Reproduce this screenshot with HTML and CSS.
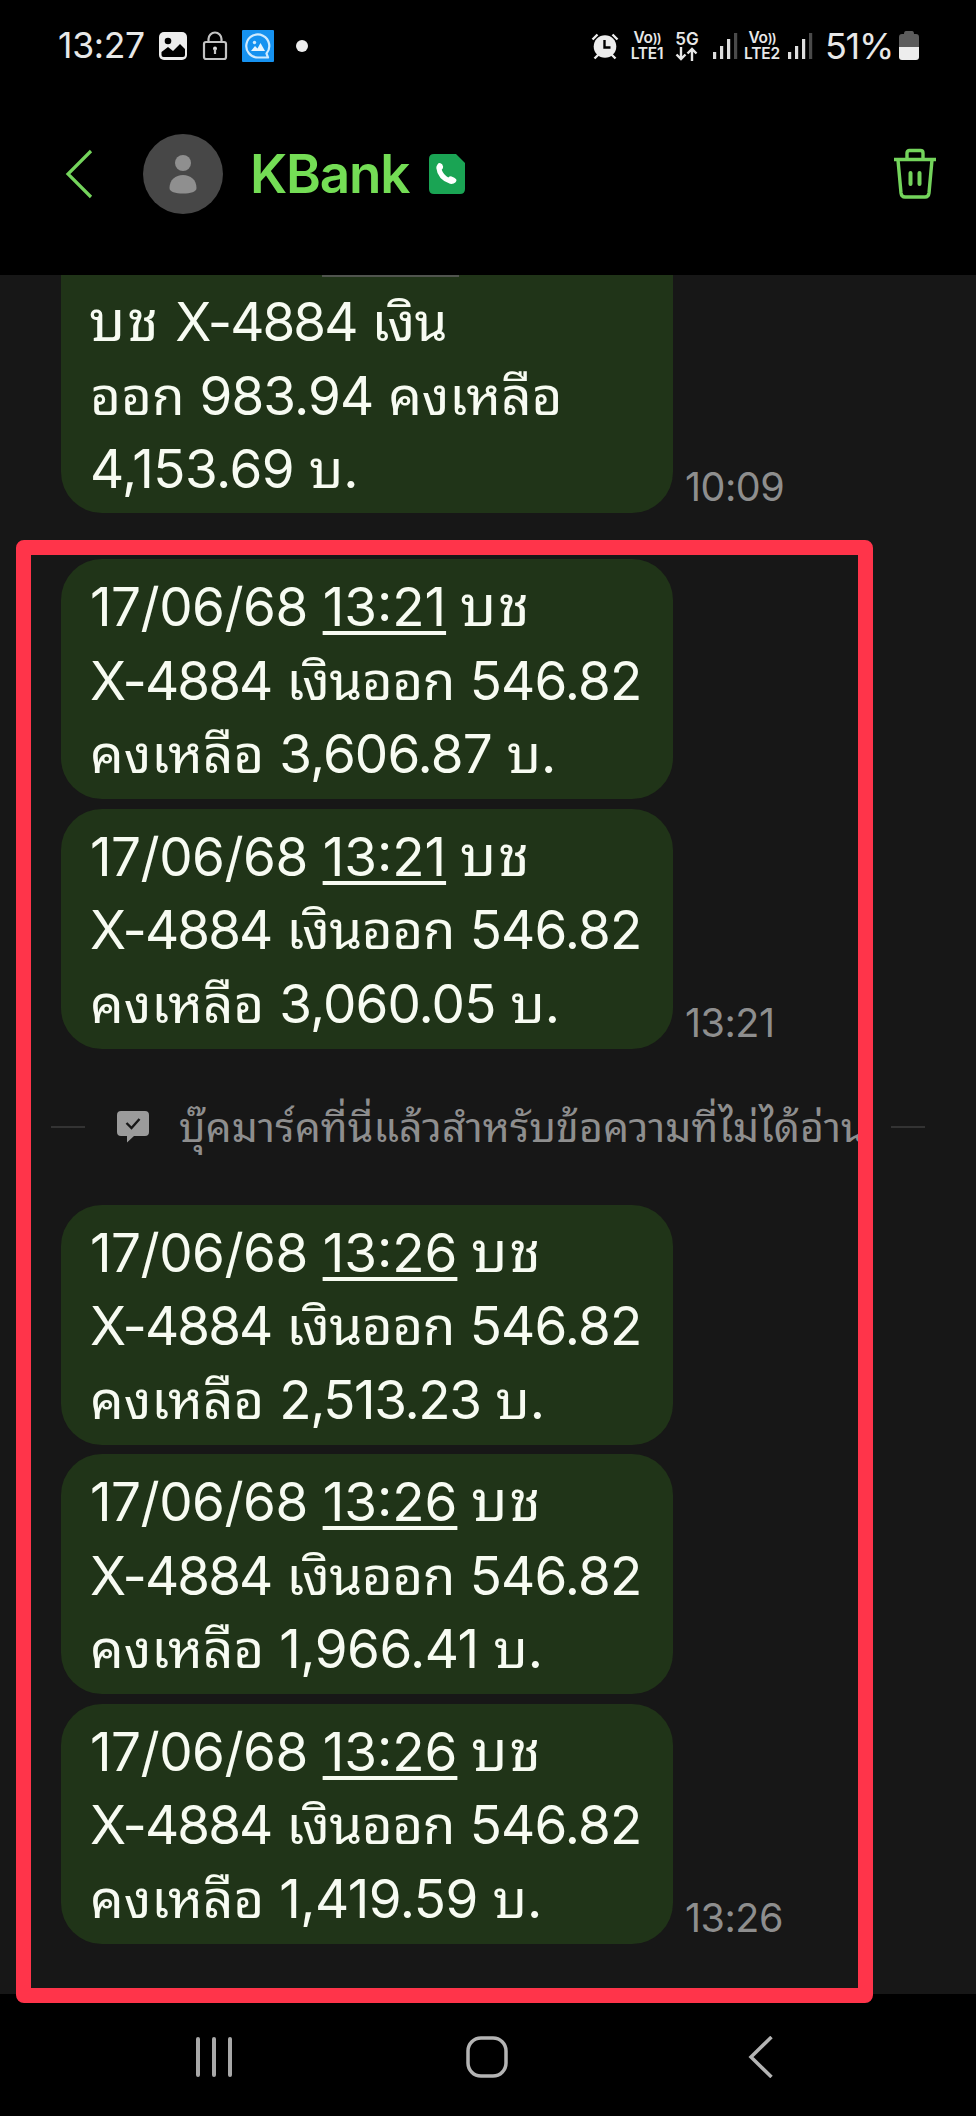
FILE: index.html
```html
<!DOCTYPE html>
<html lang="th">
<head>
<meta charset="utf-8">
<title>KBank</title>
<link rel="stylesheet" href="styles.css">
</head>
<body>
<div class="phone">
  <header class="top">
    <div class="status">
      <span class="clock">13:27</span>
      <svg class="ic-photo" width="30" height="30" viewBox="0 0 30 30"><rect x="1" y="1" width="28" height="28" rx="5" fill="#ededed"/><circle cx="10" cy="10" r="3.3" fill="#000"/><path d="M3.5 24v-3l6.5-5 5 4 7-7 5 5v6q0 2-2 2H5.500q-2 0-2-2z" fill="#000"/></svg>
      <svg class="ic-lock" width="26" height="30" viewBox="0 0 26 30" fill="none" stroke="#c4c4c4" stroke-width="2.200"><rect x="2" y="11" width="22" height="17" rx="2"/><path d="M6.500 11V8a6.500 6.500 0 0 1 13 0v3"/><circle cx="13" cy="17.500" r="2" fill="#ddd" stroke="none"/><path d="M13 18v5"/></svg>
      <svg class="ic-app" width="32" height="32" viewBox="0 0 32 32"><rect width="32" height="32" rx="1" fill="#1692f0"/><path d="M26 27.500H16A11.500 11.500 0 1 1 24.500 23.500z" fill="none" stroke="#cfeafe" stroke-width="2.200" stroke-linejoin="round"/><path d="M9 21l4-5 2.500 2.500 3-5.500 4.500 8z" fill="#e6f5ff"/><circle cx="12.500" cy="12.500" r="1.700" fill="#cfeafe"/></svg>
      <span class="dot"></span>
      <span class="grow"></span>
      <svg class="ic-alarm" width="28" height="28" viewBox="0 0 28 28"><circle cx="14" cy="14.500" r="11.300" fill="#ededed"/><path d="M1.500 7.500l5-5M26.500 7.500l-5-5M3.500 26.500l4-4M24.500 26.500l-4-4" stroke="#ededed" stroke-width="2.400"/><path d="M13.500 8v7.500h6" fill="none" stroke="#000" stroke-width="2.400"/></svg>
      <span class="volte v1"><span>Vo<i>))</i></span><span>LTE1</span></span>
      <span class="net"><span>5G</span><svg width="24" height="14" viewBox="0 0 24 14" fill="none" stroke="#e8e8e8" stroke-width="2.400"><path d="M6 0v12M1.500 7.500L6 12l4.500-4.500M17 14V2M12.500 6.500L17 2l4.500 4.500"/></svg></span>
      <svg class="s1" width="26" height="28" viewBox="0 0 26 28" fill="#dedede"><rect x="1" y="20" width="3.200" height="7"/><rect x="8" y="14" width="3.200" height="13"/><rect x="15" y="7" width="3.200" height="20"/><rect x="22" y="1" width="3.200" height="26" fill="#4a4a4a"/></svg>
      <span class="volte v2"><span>Vo<i>))</i></span><span>LTE2</span></span>
      <svg class="s2" width="26" height="28" viewBox="0 0 26 28" fill="#dedede"><rect x="1" y="20" width="3.200" height="7"/><rect x="8" y="14" width="3.200" height="13"/><rect x="15" y="7" width="3.200" height="20"/><rect x="22" y="1" width="3.200" height="26" fill="#4a4a4a"/></svg>
      <span class="pct">51%</span>
      <svg class="ic-bat" width="20" height="29" viewBox="0 0 20 29"><path d="M0 16V6q0-3 3-3h2q0-3 2-3h6q2 0 2 3h2q3 0 3 3v10z" fill="#5c5c5c"/><path d="M0 16h20v10q0 3-3 3H3q-3 0-3-3z" fill="#ededed"/></svg>
    </div>
    <div class="bar">
      <svg class="ic-back" width="28" height="50" viewBox="0 0 28 50" fill="none" stroke="#74d45c" stroke-width="3.200"><path d="M26 2L3 25l23 23"/></svg>
      <span class="avatar"><svg width="80" height="80" viewBox="0 0 80 80" fill="#8f8f8f"><circle cx="40" cy="29" r="8"/><path d="M26.500 54c0-8 6-13 13.500-13s13.500 5 13.500 13c0 4-6 5.500-13.500 5.500S26.500 58 26.500 54z"/></svg></span>
      <span class="name">KBank</span>
      <svg class="ic-call" width="36" height="40" viewBox="0 0 36 40"><path d="M5 0h22l9 9v26q0 5-5 5H5q-5 0-5-5V5q0-5 5-5z" fill="#1aa454"/><path d="M8.500 10.500q1-1.800 3-1.300 2 .5 2.600 3.300.3 2-1.400 3.300 1.800 5 6.600 7.700 1.500-1.600 3.300-1.100 3.200.9 4.600 2.800.8 1.400-.6 3-2.200 2.200-5.600 1.600Q8.500 25.500 7.300 14q-.1-2 1.200-3.500z" fill="#fff"/></svg>
      <span class="grow"></span>
      <svg class="ic-trash" width="44" height="52" viewBox="0 0 44 52" fill="none" stroke="#74d45c" stroke-width="3.400"><path d="M1 11.500h42M14 11V5q0-2.500 2.500-2.500h11q2.500 0 2.500 2.500v6M5 12l3 33q.5 4 4 4h20q3.500 0 4-4l3-33"/><path d="M17.500 25v11M26.500 25v11" stroke-width="4" stroke-linecap="round"/></svg>
    </div>
  </header>
  <main class="chat">
    <div class="row first"><div class="bubble cut">
      <p><span class="th a">บช</span> <span class="x">X-4884</span> <span class="th e">เงิน</span></p>
      <p><span class="th">ออก</span> <span class="n">983.94</span> <span class="th">คงเหลือ</span></p>
      <p><span class="dt">4,153.69</span> <span class="th">บ.</span></p></div><time>10:09</time><span class="peek"></span></div>
    <div class="row"><div class="bubble">
      <p><span class="dt">17/06/68</span> <u>13:21</u> <span class="th a">บช</span></p>
      <p><span class="x">X-4884</span> <span class="th e">เงินออก</span> <span class="y">546.82</span></p>
      <p><span class="th">คงเหลือ</span> <span class="n">3,606.87</span> <span class="th">บ.</span></p></div></div>
    <div class="row"><div class="bubble">
      <p><span class="dt">17/06/68</span> <u>13:21</u> <span class="th a">บช</span></p>
      <p><span class="x">X-4884</span> <span class="th e">เงินออก</span> <span class="y">546.82</span></p>
      <p><span class="th">คงเหลือ</span> <span class="n">3,060.05</span> <span class="th">บ.</span></p></div><time>13:21</time></div>
    <div class="mark"><span class="rule"></span>
      <svg width="34" height="34" viewBox="0 0 34 34"><path d="M5 1h24q4 0 4 4v17q0 4-4 4H18l-7 6.500V26H5q-4 0-4-4V5q0-4 4-4z" fill="#9b9b9b"/><path d="M10.500 13l5 5 8-9" fill="none" stroke="#171717" stroke-width="2.400"/></svg>
      <span class="label">บุ๊คมาร์คที่นี่แล้วสำหรับข้อความที่ไม่ได้อ่าน</span><span class="rule"></span></div>
    <div class="row"><div class="bubble">
      <p><span class="dt">17/06/68</span> <u>13:26</u> <span class="th a">บช</span></p>
      <p><span class="x">X-4884</span> <span class="th e">เงินออก</span> <span class="y">546.82</span></p>
      <p><span class="th">คงเหลือ</span> <span class="z">2,513.23</span> <span class="th">บ.</span></p></div></div>
    <div class="row"><div class="bubble">
      <p><span class="dt">17/06/68</span> <u>13:26</u> <span class="th a">บช</span></p>
      <p><span class="x">X-4884</span> <span class="th e">เงินออก</span> <span class="y">546.82</span></p>
      <p><span class="th">คงเหลือ</span> <span class="w">1,966.41</span> <span class="th">บ.</span></p></div></div>
    <div class="row"><div class="bubble">
      <p><span class="dt">17/06/68</span> <u>13:26</u> <span class="th a">บช</span></p>
      <p><span class="x">X-4884</span> <span class="th e">เงินออก</span> <span class="y">546.82</span></p>
      <p><span class="th">คงเหลือ</span> <span class="dt">1,419.59</span> <span class="th">บ.</span></p></div><time>13:26</time></div>
    <div class="frame"></div>
  </main>
  <nav class="nav">
    <svg width="40" height="42" viewBox="0 0 40 42" stroke="#a8a8a8" stroke-width="4" stroke-linecap="round"><path d="M3 3v36M19 3v36M35 3v36"/></svg>
    <svg class="home" width="42" height="42" viewBox="0 0 42 42" fill="none" stroke="#b4b4b4" stroke-width="3.500"><rect x="2" y="2" width="38" height="38" rx="13"/></svg>
    <svg width="26" height="42" viewBox="0 0 26 42" fill="none" stroke="#b4b4b4" stroke-width="3.500"><path d="M23.500 1L3 21l20.500 20"/></svg>
  </nav>
</div>
</body>
</html>
```
FILE: styles.css
```css
* { box-sizing: border-box; }
body { margin: 0; background: #000; font-family: Inter, "Noto Sans Thai Looped", "Noto Sans Thai", "Noto Sans", sans-serif; }
.phone { width: 976px; height: 2116px; display: flex; flex-direction: column; background: #000; overflow: hidden; }
svg { display: block; flex: none; }
.grow { flex: 1; }
.top { height: 275px; flex: none; }
.status { height: 91px; padding: 0 57px 0 58px; display: flex; align-items: center; color: #e8e8e8; }
.clock { width: 86px; font-size: 35.500px; letter-spacing: -0.300px; white-space: nowrap; }
.ic-photo { margin-left: 14px; }
.ic-lock { margin-left: 14px; }
.ic-app { margin-left: 14px; }
.dot { width: 12px; height: 12px; margin-left: 22px; border-radius: 50%; background: #ededed; }
.volte { width: 36px; display: flex; flex-direction: column; align-items: center; font-size: 15.500px; font-weight: 600; line-height: 16px; white-space: nowrap; letter-spacing: -0.200px; }
.volte i { font-style: normal; font-size: 13px; letter-spacing: -1px; }
.v1 { margin-left: 10px; }
.net { width: 24px; margin-left: 10px; display: flex; flex-direction: column; align-items: center; font-size: 17px; font-weight: 600; line-height: 16px; }
.s1 { margin-left: 13px; }
.v2 { margin-left: 6px; }
.s2 { margin-left: 7px; }
.pct { width: 68px; margin-left: 12px; font-size: 36px; letter-spacing: -1.300px; white-space: nowrap; }
.ic-bat { margin-left: 6px; }
.bar { height: 166px; padding: 0 39px 0 65px; display: flex; align-items: center; }
.avatar { width: 80px; height: 80px; margin-left: 50px; border-radius: 50%; background: #474747; }
.name { width: 160px; margin-left: 27px; color: #74dd55; font-size: 53px; font-weight: 600; letter-spacing: -1.200px; white-space: nowrap; }
.ic-call { margin-left: 19px; }
.chat { position: relative; height: 1719px; flex: none; display: flex; flex-direction: column; gap: 9.500px; background: #171717; }
.row { position: relative; display: flex; align-items: flex-end; padding-left: 61px; height: 240px; }
.first { height: 238px; margin-bottom: 36.500px; }
.bubble { width: 612px; height: 240px; padding: 11px 0 0 29px; border-radius: 41px; background: #203418; color: #f7fbf2; font-size: 53px; }
.cut { height: 238px; padding-top: 10px; border-radius: 0 0 41px 41px; }
.peek { position: absolute; left: 322px; top: 0; width: 137px; height: 2px; background: #50544e; }
p { margin: 0; height: 73.700px; line-height: 74px; white-space: nowrap; }
.n { letter-spacing: -0.900px; }
.z { letter-spacing: -1.400px; }
.w { letter-spacing: -0.500px; }
.dt { letter-spacing: -0.500px; }
.x { letter-spacing: -1.900px; }
.y { letter-spacing: -0.800px; }
u { letter-spacing: 0; text-decoration-thickness: 4px; text-underline-offset: 5px; }
.a { font-size: 56px; line-height: 1; letter-spacing: 2px; margin-left: -1px; }
.e { letter-spacing: -0.500px; }
time { margin-left: 12px; padding-bottom: 6px; color: #8e8e8e; font-size: 39.500px; line-height: 40px; letter-spacing: -0.500px; white-space: nowrap; }
.mark { height: 137px; display: flex; align-items: center; padding: 1px 51px 0; color: #8e8e8e; }
.rule { width: 34px; height: 2px; flex: none; background: #333; }
.mark svg { margin-left: 31px; }
.label { width: 713px; margin-left: 29px; font-size: 41px; letter-spacing: 0.100px; white-space: nowrap; overflow: hidden; line-height: 80px; }
.frame { position: absolute; left: 16px; top: 265px; width: 857px; height: 1463px; border: 15px solid #ff344a; border-radius: 8px; }
.nav { height: 122px; padding: 4px 202px 0 195px; display: flex; align-items: center; justify-content: space-between; }
.home { margin-right: 9px; }
```
